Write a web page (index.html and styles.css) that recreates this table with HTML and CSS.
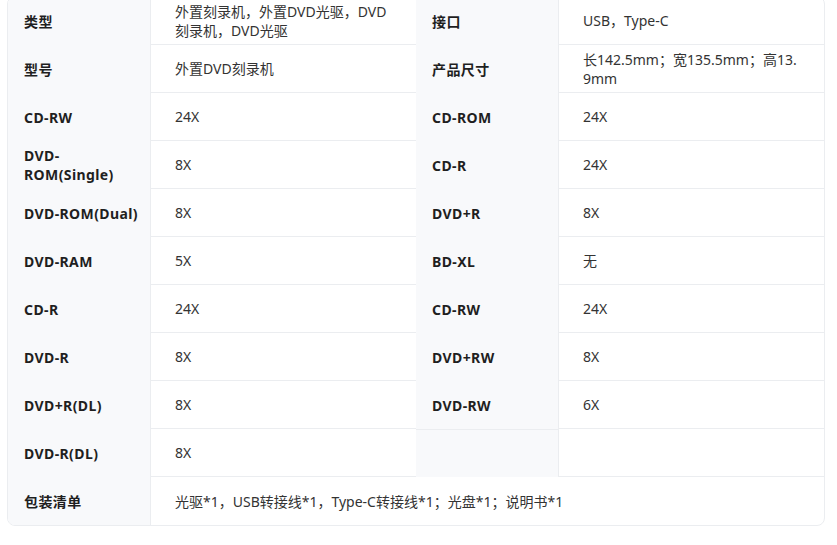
FILE: index.html
```html
<!DOCTYPE html>
<html lang="zh-CN">
<head>
<meta charset="utf-8">
<title>规格参数</title>
<link rel="stylesheet" href="styles.css">
</head>
<body>
<div class="card">
  <div class="grid">
    <div class="lbl">类型</div><div class="val">外置刻录机，外置DVD光驱，DVD刻录机，DVD光驱</div>
    <div class="lbl">接口</div><div class="val">USB，Type-C</div>

    <div class="lbl">型号</div><div class="val">外置DVD刻录机</div>
    <div class="lbl">产品尺寸</div><div class="val">长142.5mm；宽135.5mm；高13.9mm</div>

    <div class="lbl">CD-RW</div><div class="val">24X</div>
    <div class="lbl">CD-ROM</div><div class="val">24X</div>

    <div class="lbl">DVD-ROM(Single)</div><div class="val">8X</div>
    <div class="lbl">CD-R</div><div class="val">24X</div>

    <div class="lbl">DVD-ROM(Dual)</div><div class="val">8X</div>
    <div class="lbl">DVD+R</div><div class="val">8X</div>

    <div class="lbl">DVD-RAM</div><div class="val">5X</div>
    <div class="lbl">BD-XL</div><div class="val">无</div>

    <div class="lbl">CD-R</div><div class="val">24X</div>
    <div class="lbl">CD-RW</div><div class="val">24X</div>

    <div class="lbl">DVD-R</div><div class="val">8X</div>
    <div class="lbl">DVD+RW</div><div class="val">8X</div>

    <div class="lbl">DVD+R(DL)</div><div class="val">8X</div>
    <div class="lbl">DVD-RW</div><div class="val">6X</div>

    <div class="lbl">DVD-R(DL)</div><div class="val">8X</div>
    <div class="lbl empty"></div><div class="val"></div>

    <div class="lbl last">包装清单</div><div class="val wide last">光驱*1，USB转接线*1，Type-C转接线*1；光盘*1；说明书*1</div>
  </div>
</div>
</body>
</html>
```
FILE: styles.css
```css
html, body {
  margin: 0;
  padding: 0;
  background: #ffffff;
}
body {
  font-family: "Noto Sans", "Noto Sans CJK SC", sans-serif;
  font-size: 14px;
  color: #333333;
  overflow: hidden;
}
.card {
  width: 816px;
  margin: -4px 0 0 7px;
  border: 1px solid #ebedf0;
  border-radius: 8px;
  overflow: hidden;
  background: #ffffff;
}
.grid {
  display: grid;
  grid-template-columns: 142px 266px 142px 266px;
  grid-auto-rows: 48px;
}
.lbl {
  background: #f8f9fb;
  font-weight: 700;
  color: #1f1f1f;
  padding: 0 8px 0 16px;
  display: flex;
  align-items: center;
  line-height: 19px;
  letter-spacing: 0.4px;
}
.val {
  border-left: 1px solid #ebedf0;
  border-bottom: 1px solid #ebedf0;
  padding: 0 24px 0 24px;
  display: flex;
  align-items: center;
  line-height: 19px;
  word-break: break-all;
  color: #333333;
}
.empty {
  box-shadow: inset 0 1px 0 #ebedf0;
}
.wide {
  grid-column: span 3;
}
.last {
  border-bottom: none;
}
```
